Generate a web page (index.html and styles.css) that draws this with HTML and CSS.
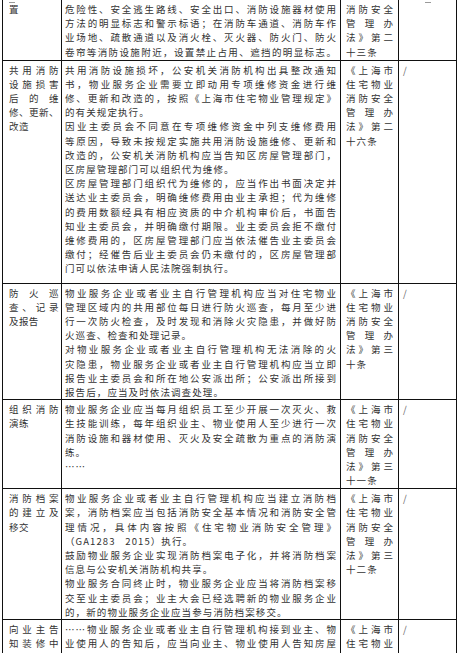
FILE: index.html
```html
<!DOCTYPE html>
<html lang="zh-CN">
<head>
<meta charset="utf-8">
<title>住宅物业消防安全管理</title>
<link rel="stylesheet" href="styles.css">
</head>
<body>
<span class="mark mark-left"></span>
<span class="mark mark-right"></span>
<table class="grid">
  <colgroup>
    <col class="c-item">
    <col class="c-text">
    <col class="c-law">
    <col class="c-note">
  </colgroup>
  <tbody>
    <tr class="r1">
      <td class="item"><span class="ln end">置</span></td>
      <td class="text">
        <span class="ln">危险性、安全逃生路线、安全出口、消防设施器材使用</span>
        <span class="ln">方法的明显标志和警示标语；在消防车通道、消防车作</span>
        <span class="ln">业场地、疏散通道以及消火栓、灭火器、防火门、防火</span>
        <span class="ln">卷帘等消防设施附近，设置禁止占用、遮挡的明显标志。</span>
      </td>
      <td class="law">
        <span class="ln">消防安全</span>
        <span class="ln">管理办</span>
        <span class="ln">法》第二</span>
        <span class="ln end">十三条</span>
      </td>
      <td class="note"></td>
    </tr>
    <tr class="r2">
      <td class="item">
        <span class="ln">共用消防</span>
        <span class="ln">设施损害</span>
        <span class="ln">后的维</span>
        <span class="ln">修、更新、</span>
        <span class="ln end">改造</span>
      </td>
      <td class="text">
        <span class="ln">共用消防设施损坏，公安机关消防机构出具整改通知</span>
        <span class="ln">书，物业服务企业需要立即动用专项维修资金进行维</span>
        <span class="ln">修、更新和改造的，按照《上海市住宅物业管理规定》</span>
        <span class="ln end">的有关规定执行。</span>
        <span class="ln">因业主委员会不同意在专项维修资金中列支维修费用</span>
        <span class="ln">等原因，导致未按规定实施共用消防设施维修、更新和</span>
        <span class="ln">改造的，公安机关消防机构应当告知区房屋管理部门，</span>
        <span class="ln end">区房屋管理部门可以组织代为维修。</span>
        <span class="ln">区房屋管理部门组织代为维修的，应当作出书面决定并</span>
        <span class="ln">送达业主委员会，明确维修费用由业主承担；代为维修</span>
        <span class="ln">的费用数额经具有相应资质的中介机构审价后，书面告</span>
        <span class="ln">知业主委员会，并明确缴付期限。业主委员会拒不缴付</span>
        <span class="ln">维修费用的，区房屋管理部门应当依法催告业主委员会</span>
        <span class="ln">缴付；经催告后业主委员会仍未缴付的，区房屋管理部</span>
        <span class="ln end">门可以依法申请人民法院强制执行。</span>
      </td>
      <td class="law">
        <span class="ln">《上海市</span>
        <span class="ln">住宅物业</span>
        <span class="ln">消防安全</span>
        <span class="ln">管理办</span>
        <span class="ln">法》第二</span>
        <span class="ln end">十六条</span>
      </td>
      <td class="note"><span class="ln end">/</span></td>
    </tr>
    <tr class="r3">
      <td class="item">
        <span class="ln">防火巡</span>
        <span class="ln">查、记录</span>
        <span class="ln end">及报告</span>
      </td>
      <td class="text">
        <span class="ln">物业服务企业或者业主自行管理机构应当对住宅物业</span>
        <span class="ln">管理区域内的共用部位每日进行防火巡查，每月至少进</span>
        <span class="ln">行一次防火检查，及时发现和消除火灾隐患，并做好防</span>
        <span class="ln end">火巡查、检查和处理记录。</span>
        <span class="ln">对物业服务企业或者业主自行管理机构无法消除的火</span>
        <span class="ln">灾隐患，物业服务企业或者业主自行管理机构应当立即</span>
        <span class="ln">报告业主委员会和所在地公安派出所；公安派出所接到</span>
        <span class="ln end">报告后，应当及时依法调查处理。</span>
      </td>
      <td class="law">
        <span class="ln">《上海市</span>
        <span class="ln">住宅物业</span>
        <span class="ln">消防安全</span>
        <span class="ln">管理办</span>
        <span class="ln">法》第三</span>
        <span class="ln end">十条</span>
      </td>
      <td class="note"><span class="ln end">/</span></td>
    </tr>
    <tr class="r4">
      <td class="item">
        <span class="ln">组织消防</span>
        <span class="ln end">演练</span>
      </td>
      <td class="text">
        <span class="ln">物业服务企业应当每月组织员工至少开展一次灭火、救</span>
        <span class="ln">生技能训练，每年组织业主、物业使用人至少进行一次</span>
        <span class="ln">消防设施和器材使用、灭火及安全疏散为重点的消防演</span>
        <span class="ln end">练。</span>
        <span class="ln end">……</span>
      </td>
      <td class="law">
        <span class="ln">《上海市</span>
        <span class="ln">住宅物业</span>
        <span class="ln">消防安全</span>
        <span class="ln">管理办</span>
        <span class="ln">法》第三</span>
        <span class="ln end">十一条</span>
      </td>
      <td class="note"><span class="ln end">/</span></td>
    </tr>
    <tr class="r5">
      <td class="item">
        <span class="ln">消防档案</span>
        <span class="ln">的建立及</span>
        <span class="ln end">移交</span>
      </td>
      <td class="text">
        <span class="ln">物业服务企业或者业主自行管理机构应当建立消防档</span>
        <span class="ln">案，消防档案应当包括消防安全基本情况和消防安全管</span>
        <span class="ln">理情况，具体内容按照《住宅物业消防安全管理》</span>
        <span class="ln end">（GA1283&nbsp;&nbsp;&nbsp;2015）执行。</span>
        <span class="ln">鼓励物业服务企业实现消防档案电子化，并将消防档案</span>
        <span class="ln end">信息与公安机关消防机构共享。</span>
        <span class="ln">物业服务合同终止时，物业服务企业应当将消防档案移</span>
        <span class="ln">交至业主委员会；业主大会已经选聘新的物业服务企业</span>
        <span class="ln end">的，新的物业服务企业应当参与消防档案移交。</span>
      </td>
      <td class="law">
        <span class="ln">《上海市</span>
        <span class="ln">住宅物业</span>
        <span class="ln">消防安全</span>
        <span class="ln">管理办</span>
        <span class="ln">法》第三</span>
        <span class="ln end">十二条</span>
      </td>
      <td class="note"><span class="ln end">/</span></td>
    </tr>
    <tr class="r6">
      <td class="item">
        <span class="ln">向业主告</span>
        <span class="ln">知装修中</span>
      </td>
      <td class="text">
        <span class="ln">……物业服务企业或者业主自行管理机构接到业主、物</span>
        <span class="ln">业使用人的告知后，应当向业主、物业使用人告知房屋</span>
      </td>
      <td class="law">
        <span class="ln">《上海市</span>
        <span class="ln">住宅物业</span>
      </td>
      <td class="note"><span class="ln end">/</span></td>
    </tr>
  </tbody>
</table>
</body>
</html>
```
FILE: styles.css
```css
html, body {
  margin: 0;
  padding: 0;
  background: #ffffff;
}

body {
  position: relative;
  height: 653px;
  overflow: hidden;
  font-family: "Noto Sans CJK SC", "Noto Sans", sans-serif;
  font-size: 9.5px;
  color: #333333;
}

.grid {
  margin-left: 2px;
  width: 454px;
  table-layout: fixed;
  border-collapse: collapse;
}

.c-item { width: 59px; }
.c-text { width: 279px; }
.c-law  { width: 58px; }
.c-note { width: 58px; }

.grid td {
  border: 1px solid #111111;
  vertical-align: top;
  padding: 2px 3px 0 3px;
  line-height: 14.2px;
}

.grid .r1 td { border-top: 0; }

.grid td.item { padding-left: 6px; padding-right: 2px; }
.grid td.text { padding-left: 3px; padding-right: 3px; }
.grid td.law  { padding-left: 5px; padding-right: 4px; }
.grid td.note { padding-left: 4px; color: #666666; }

.r1 { height: 60px; }
.r2 { height: 223px; }
.r3 { height: 115px; }
.r4 { height: 89px; }
.r5 { height: 130px; }
.r6 { height: 35px; }

.ln {
  display: block;
  white-space: nowrap;
  text-align: justify;
  text-align-last: justify;
  letter-spacing: 1.1px;
}

.ln.end {
  text-align-last: left;
}

.item .ln { letter-spacing: 0.4px; }

.mark {
  position: absolute;
  top: 2px;
  height: 1px;
  background: #9a9a9a;
}
.mark-left { left: 9px; width: 6px; }
.mark-right { left: 425px; width: 6px; }
```
